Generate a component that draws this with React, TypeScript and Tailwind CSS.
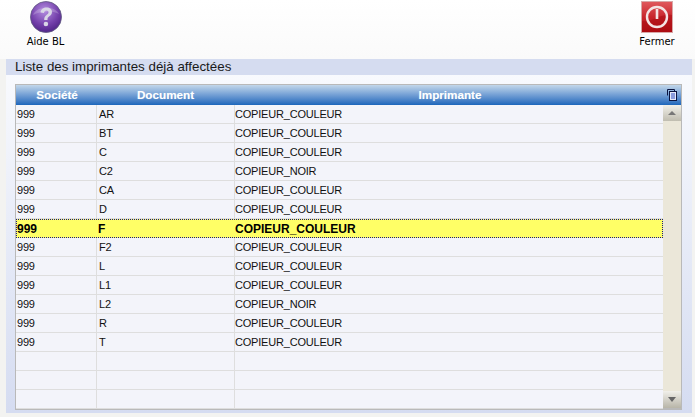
const rows = [
  ['999', 'AR', 'COPIEUR_COULEUR'],
  ['999', 'BT', 'COPIEUR_COULEUR'],
  ['999', 'C', 'COPIEUR_COULEUR'],
  ['999', 'C2', 'COPIEUR_NOIR'],
  ['999', 'CA', 'COPIEUR_COULEUR'],
  ['999', 'D', 'COPIEUR_COULEUR'],
  ['999', 'F', 'COPIEUR_COULEUR'],
  ['999', 'F2', 'COPIEUR_COULEUR'],
  ['999', 'L', 'COPIEUR_COULEUR'],
  ['999', 'L1', 'COPIEUR_COULEUR'],
  ['999', 'L2', 'COPIEUR_NOIR'],
  ['999', 'R', 'COPIEUR_COULEUR'],
  ['999', 'T', 'COPIEUR_COULEUR'],
  ['', '', ''],
  ['', '', ''],
  ['', '', ''],
]

function HelpIcon() {
  return (
    <svg width="32" height="32" viewBox="0 0 32 32">
      <defs>
        <radialGradient id="help" cx="45%" cy="30%" r="75%">
          <stop offset="0%" stopColor="#b48ee0" />
          <stop offset="60%" stopColor="#7440ab" />
          <stop offset="100%" stopColor="#4a1f82" />
        </radialGradient>
      </defs>
      <circle cx="16" cy="16" r="15.5" fill="url(#help)" stroke="#5f5a80" strokeWidth="0.8" />
      <path d="M3 14C6 5 25 4 29 13C22 9 10 10 3 14Z" fill="#ffffff" opacity="0.2" />
      <path d="M10.5 11.5C11 8 13.5 6.5 16.5 6.5C20 6.5 22 8.5 22 11C22 13.5 20.5 14.5 19 15.5C17.7 16.4 17.5 17 17.5 19H14.2C14.2 16.5 14.8 15.2 16.5 14C17.8 13.1 18.5 12.6 18.5 11.3C18.5 10.2 17.8 9.5 16.4 9.5C15 9.5 14.2 10.4 14 12Z" fill="#d9d6e6" />
      <circle cx="15.9" cy="23" r="2.3" fill="#d9d6e6" />
    </svg>
  )
}

function CloseIcon() {
  return (
    <svg width="32" height="32" viewBox="0 0 32 32">
      <defs>
        <linearGradient id="close" x1="0" y1="0" x2="0" y2="1">
          <stop offset="0%" stopColor="#e05a5e" />
          <stop offset="50%" stopColor="#c8262c" />
          <stop offset="100%" stopColor="#b00c12" />
        </linearGradient>
      </defs>
      <rect x="0.5" y="0.5" width="31" height="31" fill="url(#close)" stroke="#d8a8a8" />
      <path d="M1 20C10 22 20 12 31 14V31H1Z" fill="#a80a10" opacity="0.5" />
      <circle cx="16" cy="16" r="10" fill="none" stroke="#f4e4e4" strokeWidth="2.4" />
      <rect x="14.7" y="8" width="2.6" height="10" fill="#f4e4e4" />
    </svg>
  )
}

function ColumnsIcon() {
  return (
    <svg width="10" height="12" viewBox="0 0 10 12">
      <path d="M0.5 6.5V0.5H7.5V2.5" fill="none" stroke="#0a1440" />
      <rect x="2.5" y="2.5" width="7" height="9" fill="#e6ebfb" stroke="#0a1440" />
      <path d="M4 5H8M4 7H8M4 9H8" stroke="#3050c0" />
    </svg>
  )
}

export default function App() {
  return (
    <div className="w-[695px] h-[417px] overflow-hidden bg-[#f3f3f1] font-['Liberation_Sans',sans-serif] flex flex-col">
      <div className="h-[59px] bg-gradient-to-b from-white to-[#fafafa] flex justify-between pl-[26px] pr-[20px] pt-[1px] shrink-0">
        <div className="flex flex-col items-center w-[39px]">
          <HelpIcon />
          <span className="font-['DejaVu_Sans',sans-serif] text-[10px] leading-[11px] mt-[3px] text-black whitespace-nowrap">Aide BL</span>
        </div>
        <div className="flex flex-col items-center w-[36px]">
          <CloseIcon />
          <span className="font-['DejaVu_Sans',sans-serif] text-[10px] leading-[11px] mt-[3px] text-black whitespace-nowrap">Fermer</span>
        </div>
      </div>

      <div className="ml-[6px] mr-[3px] h-[354px] flex flex-col bg-gradient-to-b from-[#fafbfe] to-[#d5dcf1]">
        <div className="h-[16px] bg-[#d5dcf0] pl-[9px] text-[13.35px] leading-[16px] text-[#1a1a1a]">Liste des imprimantes déjà affectées</div>

        <div className="mt-[9px] ml-[9px] mr-[10px] h-[326px] border border-[#b9b9b9] border-b-2 flex flex-col bg-[#f3f4fa]">
          <div className="h-[20px] shrink-0 flex items-center bg-gradient-to-b from-[#c3d7ea] to-[#1b66bb] text-white font-bold text-[11.7px] [text-shadow:0_0_1px_#9fc0e0]">
            <div className="w-[81px] text-center pl-[1px]">Société</div>
            <div className="w-[138px] text-center pr-[1px]">Document</div>
            <div className="flex-1 text-center pl-[2px]">Imprimante</div>
            <div className="w-[18px] flex justify-center"><ColumnsIcon /></div>
          </div>

          <div className="flex-1 flex min-h-0">
            <div className="flex-1 flex flex-col">
              {rows.map((r, i) => {
                const selected = i === 6
                return (
                  <div
                    key={i}
                    className={selected
                      ? 'h-[19px] shrink-0 flex bg-[#ffff66] font-bold text-[12px] leading-[18px] text-black border border-dotted border-[#1a1a80]'
                      : 'h-[19px] shrink-0 flex text-[11px] tracking-[-0.2px] leading-[18px] text-[#111] border-b-[1.5px] border-[#dedede]'}
                  >
                    <div className={selected ? 'w-[80px]' : 'w-[81px] pl-[1px] border-r border-[#dedede]'}>{r[0]}</div>
                    <div className={selected ? 'w-[138px] pl-[1px]' : 'w-[138px] pl-[2px] border-r border-[#dedede]'}>{r[1]}</div>
                    <div className="flex-1">{r[2]}</div>
                  </div>
                )
              })}
            </div>
            <div className="w-[18px] shrink-0 bg-[#ebe7d9] flex flex-col justify-between">
              <div className="h-[16px] bg-gradient-to-b from-[#f1f0ea] to-[#c0bdb0] flex items-center justify-center">
                <div className="w-0 h-0 border-x-[4px] border-x-transparent border-b-[4px] border-b-[#777]" />
              </div>
              <div className="h-[17px] bg-gradient-to-b from-[#f1f0ea] to-[#b8b5a8] flex items-center justify-center">
                <div className="w-0 h-0 border-x-[4px] border-x-transparent border-t-[5px] border-t-[#666]" />
              </div>
            </div>
          </div>
        </div>
      </div>
    </div>
  )
}
